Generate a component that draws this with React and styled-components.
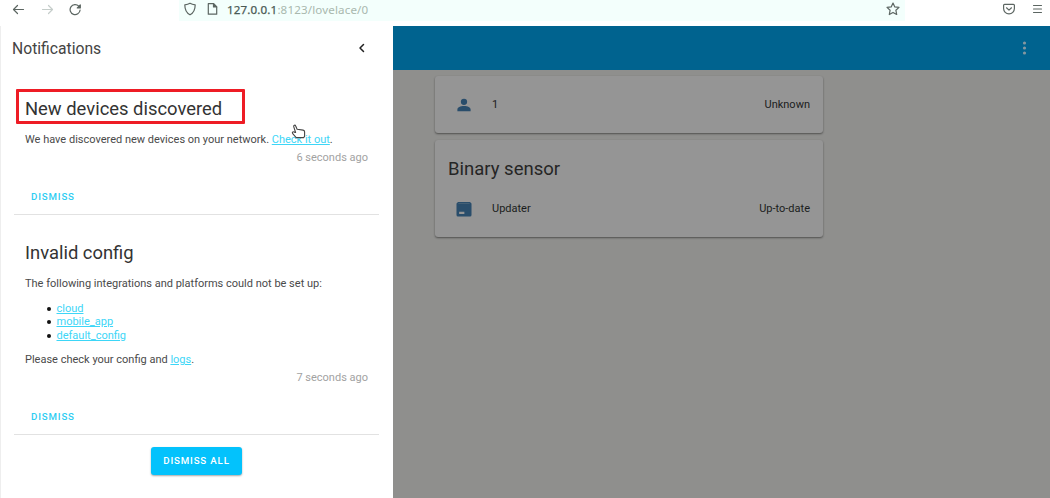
import React from "react";
import styled, { createGlobalStyle } from "styled-components";

const Global = createGlobalStyle`
  * { box-sizing: border-box; }
  html, body, #root { height: 100%; }
  body { margin: 0; overflow: hidden; background: #fff; font-family: Roboto, "Liberation Sans", sans-serif; color: #333; }
`;

const Page = styled.div`
  display: flex;
  flex-direction: column;
  width: 1050px;
  height: 498px;
`;

const BrowserBar = styled.div`
  display: flex;
  height: 26px;
  flex: none;
  padding: 0 7px 5px 12px;
  background: #fff;
`;

const NavButtons = styled.div`
  display: flex;
  width: 167px;
  gap: 15.5px;
`;

const AddressBar = styled.div`
  display: flex;
  width: 726px;
  padding: 0 5px 0 4px;
  background: #f3fffc;
`;

const Address = styled.div`
  flex: 1;
  margin-left: 8px;
  padding-top: 1px;
  font: 11.6px/18px "Noto Sans", sans-serif;
  letter-spacing: 0.14px;
  color: #a9b8ae;
  white-space: pre;
`;

const Host = styled.span`
  color: #4a5a55;
  -webkit-text-stroke: 0.25px #4a5a55;
`;

const BrowserTools = styled.div`
  display: flex;
  flex: 1;
  justify-content: flex-end;
  gap: 16px;
`;

const Icon = styled.svg`
  display: block;
  flex: none;
  fill: none;
  stroke: ${(p) => p.$color || "#5c6662"};
  stroke-width: ${(p) => p.$weight || 1.2};
  stroke-linecap: round;
  stroke-linejoin: round;
  margin-left: ${(p) => p.$left || 0}px;
`;

const Body = styled.div`
  display: flex;
  flex: 1;
  min-height: 0;
`;

const Drawer = styled.aside`
  width: 393px;
  flex: none;
  background: #fff;
  border-left: 1px solid #eee;
`;

const DrawerHeader = styled.header`
  display: flex;
  align-items: center;
  justify-content: space-between;
  height: 44px;
  padding: 0 26px 0 11px;
  font-size: 15.7px;
  color: #444;
`;

const Notification = styled.section`
  position: relative;
  display: flex;
  flex-direction: column;
  height: ${(p) => p.$height}px;
  margin: 0 14px 0 13px;
  padding: ${(p) => p.$top}px 11px 0 11px;
  border-bottom: 1px solid #e2e2e2;
`;

const Title = styled.h2`
  margin: 0;
  font-size: 18.4px;
  font-weight: 400;
  line-height: 26px;
  color: #333;
`;

const Text = styled.p`
  margin: ${(p) => p.$gap}px 0 0;
  font-size: 11px;
  line-height: 14px;
  white-space: nowrap;
  color: #4a4a4a;
`;

const Link = styled.a`
  color: #3dd6f7;
  text-decoration: underline;
`;

const List = styled.ul`
  margin: 11px 0 0;
  padding-left: 21.5px;
  list-style: none;
  font-size: 11px;
  line-height: 13.4px;
`;

const ListItem = styled.li`
  display: flex;
  align-items: center;

  &::before {
    content: "";
    width: 4px;
    height: 4px;
    margin-right: 6px;
    border-radius: 50%;
    background: #111;
  }
`;

const Time = styled.div`
  margin-top: ${(p) => p.$gap}px;
  text-align: right;
  font-size: 11px;
  line-height: 14px;
  color: #a2a2a2;
`;

const Dismiss = styled.button`
  align-self: flex-start;
  margin: 25px 0 0 6px;
  padding: 0;
  border: 0;
  background: none;
  font: 500 9.7px/14px Roboto, sans-serif;
  letter-spacing: 0.85px;
  color: #2fcdf2;
`;

const Highlight = styled.div`
  position: absolute;
  left: 2px;
  top: 19px;
  width: 229px;
  height: 35px;
  border: 3px solid #ee1c25;
  border-radius: 1px;
`;

const Cursor = styled.svg`
  position: absolute;
  left: 277px;
  top: 54px;
`;

const DismissAll = styled.button`
  display: block;
  width: 91px;
  height: 28px;
  margin: 12px 0 0 150px;
  padding: 0;
  border: 0;
  border-radius: 3px;
  background: #03c2fc;
  box-shadow: 0 1px 2px rgba(0, 0, 0, 0.35);
  font: 500 9.7px/28px Roboto, sans-serif;
  letter-spacing: 0.85px;
  color: #fff;
`;

const Dashboard = styled.main`
  flex: 1;
  background: #8f8f8d;
`;

const AppHeader = styled.div`
  display: flex;
  justify-content: flex-end;
  align-items: center;
  height: 44px;
  padding-right: 23px;
  background: #00638f;
`;

const Cards = styled.div`
  display: flex;
  flex-direction: column;
  gap: 7px;
  width: 388px;
  margin: 6px 0 0 42px;
`;

const Card = styled.section`
  height: ${(p) => p.$height}px;
  padding: ${(p) => p.$top}px 13px 0;
  border-radius: 3px;
  background: #959595;
  box-shadow: 0 1px 2px rgba(0, 0, 0, 0.45);
`;

const CardTitle = styled.h1`
  margin: 0 0 11px;
  font-size: 18.5px;
  font-weight: 400;
  line-height: 26px;
  color: #252525;
`;

const Entity = styled.div`
  display: flex;
  align-items: center;
  height: 31px;
  font-size: 11px;
  color: #1b1d20;
`;

const EntityIcon = styled.svg`
  width: 18px;
  height: 18px;
  margin: 0 19px 0 7px;
  fill: #294d6b;
`;

const EntityName = styled.span`
  flex: 1;
`;

export default function App() {
  return (
    <Page>
      <Global />
      <BrowserBar>
        <NavButtons>
          <Icon width="13" height="18"><path d="M1.5 9.5h10M5.5 5.5l-4 4 4 4" /></Icon>
          <Icon width="13" height="18" $color="#c5cdca"><path d="M1.5 9.5h10M7.5 5.5l4 4-4 4" /></Icon>
          <Icon width="13" height="18"><path d="M9.8 6.2a5 5 0 1 0 1.3 3.8" /><path d="M11.3 5v3H8.3z" fill="#5c6662" /></Icon>
        </NavButtons>
        <AddressBar>
          <Icon width="14" height="18"><path d="M7 3.3c1.6 1 3.4 1.4 5.2 1.5 0 5-1.2 8-5.2 10-4-2-5.2-5-5.2-10C3.6 4.7 5.4 4.3 7 3.3z" /></Icon>
          <Icon width="13" height="18" $left="9"><path d="M2.3 3.7h5.2l3.2 3.2v7.3H2.3z" /><path d="M7.5 3.7v3.2h3.2z" fill="#5c6662" /></Icon>
          <Address><Host>127.0.0.1</Host>:8123/lovelace/0</Address>
          <Icon width="14" height="18"><path d="M7 3l1.8 3.9 4.2.5-3.1 2.9.8 4.2L7 12.4l-3.7 2.1.8-4.2L1 7.4l4.2-.5z" /></Icon>
        </AddressBar>
        <BrowserTools>
          <Icon width="14" height="18"><path d="M2.6 4.3h8.8q1 0 1 1v3.2a5.4 5.4 0 0 1-10.800 0V5.3q0-1 1-1zM4.5 7.8L7 10.1l2.5-2.3" /></Icon>
          <Icon width="11" height="18" $weight="1.1"><path d="M1.5 5.500h8M1.5 9h8M1.5 12.500h8" /></Icon>
        </BrowserTools>
      </BrowserBar>
      <Body>
        <Drawer>
          <DrawerHeader>
            Notifications
            <Icon width="10" height="12" $weight="1.5" $color="#222"><path d="M6.5 2.5L3 6l3.5 3.5" /></Icon>
          </DrawerHeader>
          <Notification $height={145} $top={26}>
            <Highlight />
            <Title>New devices discovered</Title>
            <Text $gap={11}>We have discovered new devices on your network. <Link>Check it out</Link>.</Text>
            <Time $gap={4}>6 seconds ago</Time>
            <Dismiss>DISMISS</Dismiss>
            <Cursor width="16" height="16" viewBox="0 0 16 16">
              <path d="M4.6 8.5L2.7 2.6C2.3 1 4.2.6 4.7 2l1.4 3.3 6 .8c1.2.2 1.5.8 1.5 1.7v4.6l-1 1.2H5.2L1.5 9.3c-.6-1.2.8-1.9 1.7-1.2z" fill="#fff" stroke="#444" strokeWidth="1.1" strokeLinejoin="round" />
            </Cursor>
          </Notification>
          <Notification $height={220} $top={25}>
            <Title>Invalid config</Title>
            <Text $gap={11}>The following integrations and platforms could not be set up:</Text>
            <List>
              <ListItem><Link>cloud</Link></ListItem>
              <ListItem><Link>mobile_app</Link></ListItem>
              <ListItem><Link>default_config</Link></ListItem>
            </List>
            <Text $gap={11}>Please check your config and <Link>logs</Link>.</Text>
            <Time $gap={4}>7 seconds ago</Time>
            <Dismiss>DISMISS</Dismiss>
          </Notification>
          <DismissAll>DISMISS ALL</DismissAll>
        </Drawer>
        <Dashboard>
          <AppHeader>
            <svg width="5" height="14" fill="#8497a0">
              <circle cx="2.5" cy="2" r="1.6" /><circle cx="2.5" cy="7" r="1.6" /><circle cx="2.5" cy="12" r="1.6" />
            </svg>
          </AppHeader>
          <Cards>
            <Card $height={57} $top={13}>
              <Entity>
                <EntityIcon viewBox="0 0 24 24"><path d="M12 3.5a4.200 4.200 0 1 1 0 8.400 4.200 4.200 0 0 1 0-8.400zm0 9.800c5 0 8.800 2 8.800 4.500v2.500H3.200v-2.500c0-2.500 3.800-4.500 8.800-4.500z" /></EntityIcon>
                <EntityName>1</EntityName>Unknown
              </Entity>
            </Card>
            <Card $height={97} $top={16}>
              <CardTitle>Binary sensor</CardTitle>
              <Entity>
                <EntityIcon viewBox="0 0 24 24"><path fillRule="evenodd" d="M4 2.500h16l2 2V20a2 2 0 0 1-2 2H4a2 2 0 0 1-2-2V4.500zM5.500 15.500v3.200h7v-3.200zM4.500 4.300v.5h15v-.5z" /></EntityIcon>
                <EntityName>Updater</EntityName>Up-to-date
              </Entity>
            </Card>
          </Cards>
        </Dashboard>
      </Body>
    </Page>
  );
}
